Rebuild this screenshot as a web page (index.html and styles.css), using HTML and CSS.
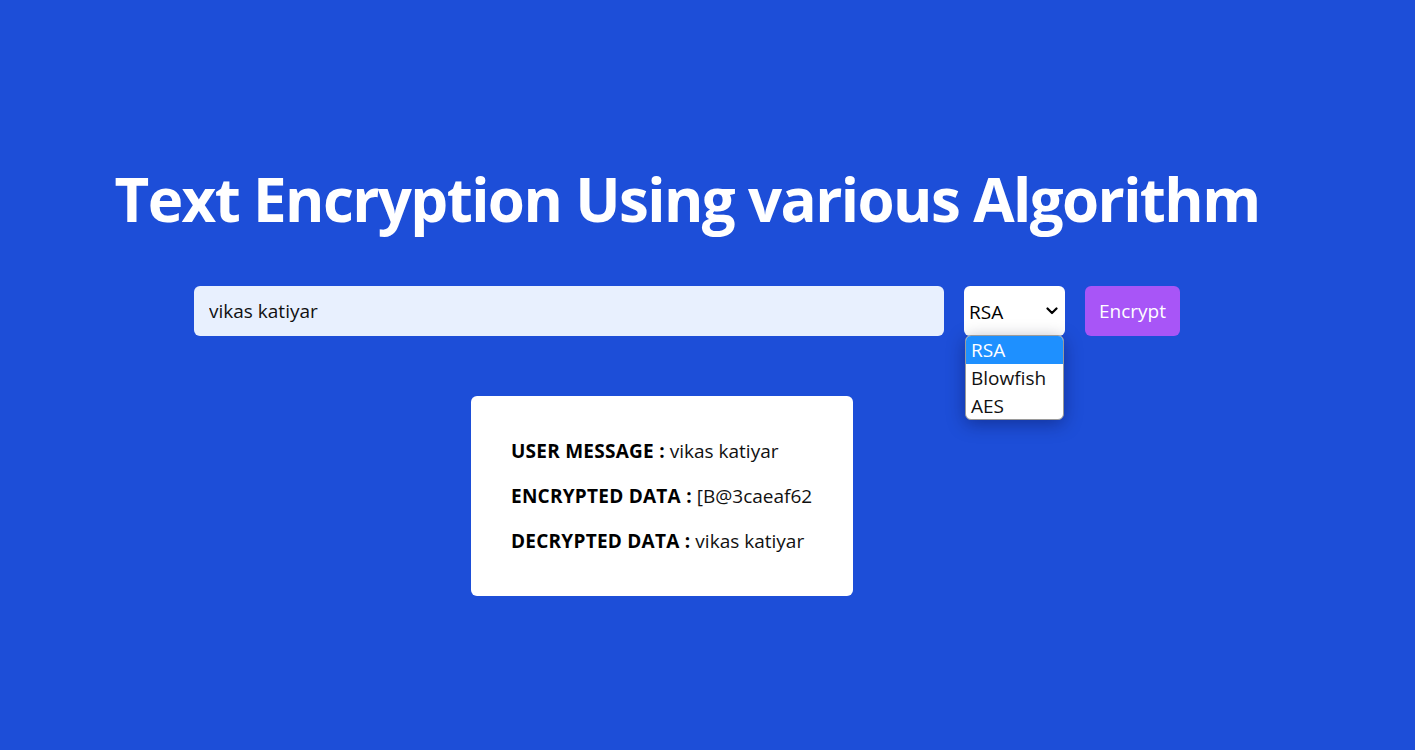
FILE: index.html
```html
<!DOCTYPE html>
<html lang="en">
<head>
<meta charset="utf-8">
<title>Text Encryption</title>
<link rel="stylesheet" href="styles.css">
</head>
<body>
<main class="page">
  <h1 class="title">Text Encryption Using various Algorithm</h1>
  <form class="row">
    <input class="msg" type="text" value="vikas katiyar">
    <div class="algo">
      <div class="select">
        <span>RSA</span>
        <svg class="chev" width="12" height="8" viewBox="0 0 12 8"><path d="M1.5 1.5 L6 6 L10.5 1.5" fill="none" stroke="#000" stroke-width="2.2" stroke-linecap="round" stroke-linejoin="round"/></svg>
      </div>
      <ul class="listbox">
        <li class="opt active">RSA</li>
        <li class="opt">Blowfish</li>
        <li class="opt">AES</li>
      </ul>
    </div>
    <button class="btn" type="button">Encrypt</button>
  </form>
  <section class="card">
    <p class="line"><b>USER MESSAGE :</b> vikas katiyar</p>
    <p class="line"><b>ENCRYPTED DATA :</b> [B@3caeaf62</p>
    <p class="line"><b>DECRYPTED DATA :</b> vikas katiyar</p>
  </section>
</main>
</body>
</html>
```
FILE: styles.css
```css
* { box-sizing: border-box; }
html, body { margin: 0; padding: 0; }
body {
  background: #1d4ed8;
  font-family: "Open Sans", "Noto Sans", sans-serif;
  height: 100vh;
  overflow: hidden;
}
.page {
  display: flex;
  flex-direction: column;
  align-items: center;
  padding: 169px 41px 0 0;
}
.title {
  margin: 0;
  font-size: 60px;
  line-height: 60px;
  font-weight: 700;
  letter-spacing: -1.6px;
  color: #fff;
  white-space: nowrap;
}
.row {
  display: flex;
  gap: 20px;
  margin-top: 57px;
}
.msg {
  width: 750px;
  height: 50px;
  border: none;
  border-radius: 6px;
  background: #e8f0fe;
  padding: 0 15px;
  font: 19px "Open Sans", sans-serif;
  color: #111;
  outline: none;
}
.algo { position: relative; }
.select {
  width: 101px;
  height: 50px;
  background: #fff;
  border-radius: 6px;
  display: flex;
  align-items: center;
  justify-content: space-between;
  padding: 2px 5px 0 5px;
  font-size: 19px;
  color: #000;
}
.chev { margin-right: 2px; margin-top: -2px; }
.listbox {
  position: absolute;
  top: 49px;
  left: 1px;
  width: 99px;
  height: 85px;
  margin: 0;
  padding: 0;
  list-style: none;
  background: #fff;
  border: 1px solid #9a9a9a;
  border-radius: 6px;
  box-shadow: 0 4px 18px rgba(0, 0, 40, 0.35);
  overflow: hidden;
}
.opt {
  height: 28px;
  line-height: 28px;
  padding-left: 5px;
  font-size: 19px;
  color: #111;
}
.opt.active { background: #1e90ff; color: #fff; }
.btn {
  width: 95px;
  height: 50px;
  border: none;
  border-radius: 6px;
  background: #a855f7;
  color: #fff;
  font: 19px "Open Sans", sans-serif;
  padding: 0;
}
.card {
  align-self: flex-start;
  margin: 60px 0 0 471px;
  width: 382px;
  height: 200px;
  background: #fff;
  border-radius: 6px;
  padding: 41px 40px;
  display: flex;
  flex-direction: column;
  gap: 17px;
}
.line {
  margin: 0;
  font-size: 19px;
  line-height: 28px;
  color: #111;
  white-space: nowrap;
}
.line b { font-weight: 700; color: #000; letter-spacing: 0.25px; }
```
